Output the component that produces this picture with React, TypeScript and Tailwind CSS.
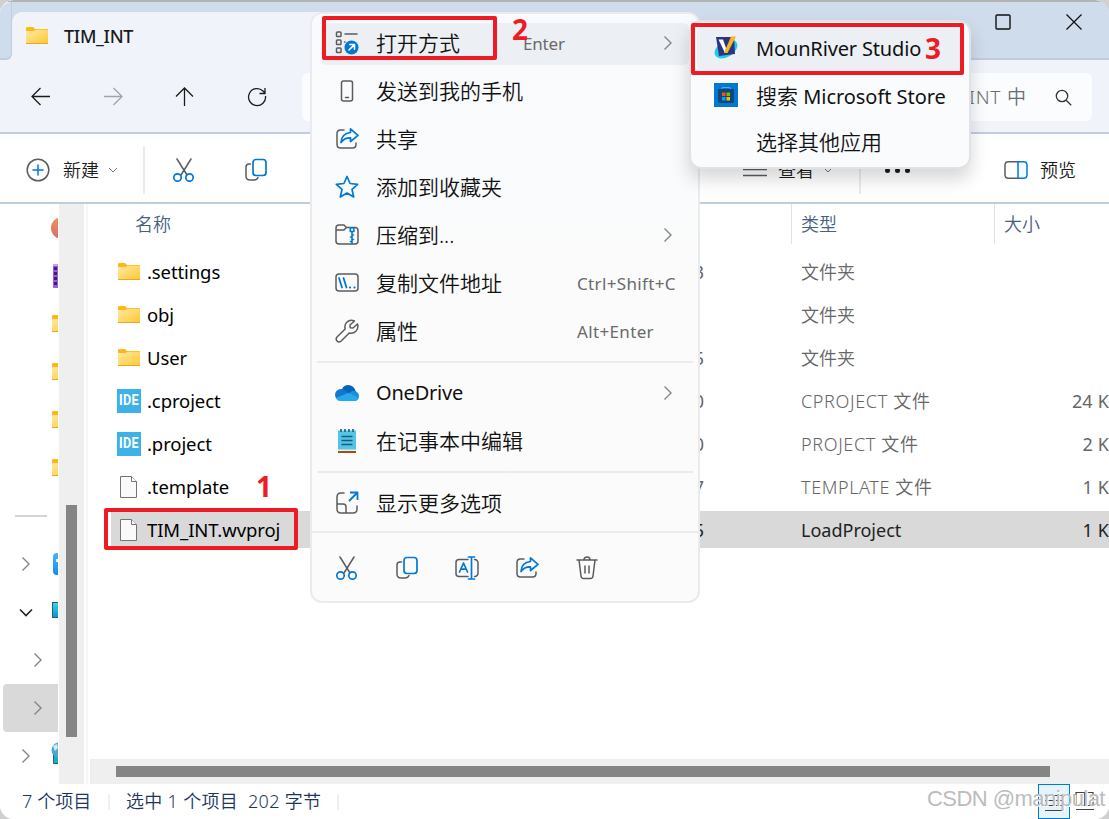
import type { ReactNode } from "react";

const GRAY = "#5c5c5c";
const BLUE = "#0078d4";

function Svg({ children, size = 24, className = "" }: { children: ReactNode; size?: number; className?: string }) {
    return (
        <svg
            width={size}
            height={size}
            viewBox="0 0 24 24"
            fill="none"
            stroke={GRAY}
            strokeWidth="1.5"
            strokeLinecap="round"
            strokeLinejoin="round"
            className={`shrink-0 ${className}`}
        >
            {children}
        </svg>
    );
}

function FolderIcon() {
    return (
        <svg width="24" height="24" viewBox="0 0 24 24" className="shrink-0">
            <defs>
                <linearGradient id="folder" x1="0" y1="0" x2="1" y2="1">
                    <stop offset="0" stopColor="#ffe9a3" />
                    <stop offset="1" stopColor="#ffc833" />
                </linearGradient>
            </defs>
            <path d="M1 4.500Q1 3 2.200 3H8l2 2h13v3H1z" fill="#fdb813" />
            <path d="M1 7h7.500L10.500 5.700H23v13.800H1z" fill="url(#folder)" />
            <path d="M1 19.500h22" stroke="#e9a820" />
        </svg>
    );
}

function FileIcon() {
    return (
        <svg width="24" height="24" viewBox="0 0 24 24" fill="#fafafa" stroke="#737373" className="shrink-0">
            <path d="M3.500 1.500h11l5 5v16h-16z" />
            <path d="M14.500 1.500v5h5" fill="#fff" />
        </svg>
    );
}

function IdeIcon() {
    return (
        <span className="flex size-6 shrink-0 items-center justify-center bg-[#3db2e6] pb-0.5 font-['Roboto'] text-[14px] font-bold tracking-[0.3px] text-white">
            <span className="scale-x-90">IDE</span>
        </span>
    );
}

function ScissorsIcon() {
    return (
        <Svg>
            <path d="M5 1l10 16M19 1L9 17" />
            <g stroke={BLUE} strokeWidth="1.7">
                <circle cx="5.500" cy="19.500" r="3.700" />
                <circle cx="17.500" cy="19.500" r="3.700" />
            </g>
        </Svg>
    );
}

function CopyIcon() {
    return (
        <Svg>
            <path d="M6.500 6H5Q2 6 2 9v9q0 4 4 4h4q3 0 4-2.500" />
            <rect x="9" y="1.500" width="13" height="16" rx="3" stroke={BLUE} strokeWidth="1.7" />
        </Svg>
    );
}

function ShareIcon() {
    return (
        <Svg>
            <path d="M9 3H5.500Q2 3 2 6.500v11Q2 21 5.500 21h12q3.500 0 3.500-3.500V16" />
            <path
                d="M15.500 1.800L23 8.300l-7.500 6.200v-3.700Q9.500 10.500 6 15.500 6.500 6.500 15.500 5.500z"
                stroke={BLUE}
                strokeWidth="1.7"
            />
        </Svg>
    );
}

function OpenWithIcon() {
    return (
        <Svg>
            <rect x="1.500" y="1" width="4.500" height="4.500" rx=".8" />
            <rect x="1.500" y="9" width="4.500" height="4.500" rx=".8" />
            <rect x="1.500" y="17" width="4.500" height="4.500" rx=".8" />
            <path d="M10 3h12M9.500 11h.5" />
            <circle cx="16.500" cy="16.500" r="7" fill={BLUE} stroke="none" />
            <path d="M14 19l5-5M14.800 13.500h4.700v4.700" stroke="#fff" strokeWidth="1.6" />
        </Svg>
    );
}

function PhoneIcon() {
    return (
        <Svg>
            <rect x="6.500" y="2" width="11" height="20" rx="2" />
            <path d="M10.500 18.500h3" />
        </Svg>
    );
}

function StarIcon() {
    return (
        <Svg>
            <path
                d="M12 1.500l3.100 7 7.600.8-5.700 5.100 1.700 7.600-6.700-4-6.700 4L7 14.400 1.300 9.300l7.600-.8z"
                stroke={BLUE}
                strokeWidth="1.7"
            />
        </Svg>
    );
}

function ZipIcon() {
    return (
        <Svg>
            <path d="M1 7V5q0-3 3-3h5l2.500 2.500H20q3 0 3 3V18q0 3-3 3H4q-3 0-3-3zM1 7h8l2.500-2.500" />
            <g stroke={BLUE} strokeWidth="1.6">
                <rect x="15.300" y="4.700" width="3.600" height="3.800" />
                <path d="M17 9v12M17 12h1.500M17 16.500h1.500M15.500 14H17M15.500 18.500H17" />
            </g>
        </Svg>
    );
}

function PathIcon() {
    return (
        <Svg>
            <rect x="1" y="3" width="22" height="17" rx="3" />
            <path d="M4 7l3 9.500M8.500 7l3 9.500M14.800 16.500h.4M19.300 16.500h.4" stroke={BLUE} strokeWidth="1.8" />
        </Svg>
    );
}

function WrenchIcon() {
    return (
        <Svg>
            <path d="M19.500 2Q15 0 11.800 3.200 9 6 10.200 10L2 18q-1.700 2 0 4t4.200 0l8-8q4 1 6.700-1.800Q23.800 9 22.500 5L18 9l-2.800-.3L15 6z" />
        </Svg>
    );
}

function OneDriveIcon() {
    return (
        <svg width="24" height="24" viewBox="0 0 24 24" className="shrink-0">
            <path d="M6 12Q7 4 13 4t8 7l-7 5z" fill="#0364b8" />
            <path d="M5 19q-5-1-5-5.500Q.5 8.500 6 8q4-.5 9 6z" fill="#0f78d4" />
            <path d="M13 14q3-5 7-4 4 1.500 4 5 0 4-4 5h-5z" fill="#1490df" />
            <path d="M1 17l12-5q2 0 10.500 5-1 3-4 3H5q-3 0-4-3z" fill="#28a8ea" />
        </svg>
    );
}

function NotepadIcon() {
    return (
        <svg width="24" height="24" viewBox="0 0 24 24" className="shrink-0">
            <path d="M3 21h18v3H3z" fill="#a5500a" />
            <path d="M3 19h18v3H3z" fill="#e9eef0" />
            <path d="M3 1.500h18v19H3z" fill="#55c5e6" />
            <path d="M6 0v3M10 0v3M14 0v3M18 0v3" stroke="#155e80" strokeWidth="1.6" />
            <path d="M6.500 7.500h11M6.500 11.500h11M6.500 15.500h11" stroke="#155e80" strokeWidth="1.500" />
        </svg>
    );
}

function MoreOptionsIcon() {
    return (
        <Svg>
            <path d="M9 2H6Q2 2 2 6v12q0 4 4 4h12q4 0 4-4v-3M2 13h6q3 0 3 3v6" />
            <path d="M14 10l8-8M15 1.500h7.500V9" stroke={BLUE} strokeWidth="1.8" strokeLinecap="butt" />
        </Svg>
    );
}

function RenameIcon() {
    return (
        <Svg>
            <path d="M13 3.500H4q-3 0-3 3v11q0 3 3 3h9M19.500 3.500q3.500 0 3.500 4v9q0 4-3.500 4" />
            <path d="M4.500 16L8.500 7l4 9M6 13.200h5M16.500 1v22M13.500 1h6M13.500 23h6" stroke={BLUE} strokeWidth="1.7" />
        </Svg>
    );
}

function TrashIcon() {
    return (
        <Svg>
            <path d="M2 4h20M4 4l2 16q.3 2.500 2.500 2.500h7q2.200 0 2.500-2.500l2-16M9 4q0-3 3-3t3 3M10 10v7M14 10v7" />
        </Svg>
    );
}

function MounRiverIcon() {
    return (
        <svg width="24" height="24" viewBox="0 0 24 24" className="shrink-0">
            <ellipse cx="12" cy="13" rx="12.500" ry="8" fill="#20c9ef" transform="rotate(-32 12 13)" />
            <path d="M2 1h18l1 17-16 2z" fill="#29357f" />
            <path d="M4.500 3.500h4.500l3 8.500-1 5z" fill="#fff" />
            <path d="M17 .5h5L13.500 17H10z" fill="#f7b523" />
        </svg>
    );
}

function StoreIcon() {
    return (
        <svg width="24" height="24" viewBox="0 0 24 24" className="shrink-0">
            <path d="M0 0h24v24H0z" fill="#0078d4" />
            <path d="M4 6h16v12q0 2-2 2H6q-2 0-2-2z" fill="#134577" />
            <path d="M8 6V4.500h8V6" stroke="#38b6f0" fill="none" />
            <path d="M8 9.500h3.500V13H8z" fill="#f25022" />
            <path d="M12.500 9.500H16V13h-3.500z" fill="#7fba00" />
            <path d="M8 14h3.500v3.500H8z" fill="#00a4ef" />
            <path d="M12.500 14H16v3.500h-3.500z" fill="#ffb900" />
        </svg>
    );
}

function ChevronRight({ className = "" }: { className?: string }) {
    return (
        <svg width="10" height="16" viewBox="0 0 10 16" fill="none" stroke="#858585" strokeWidth="1.400" className={`shrink-0 ${className}`}>
            <path d="M1.500 1.500L8 8l-6.500 6.500" />
        </svg>
    );
}

function ChevronDown({ className = "" }: { className?: string }) {
    return (
        <svg width="10" height="6" viewBox="0 0 10 6" fill="none" stroke="#777" className={`shrink-0 ${className}`}>
            <path d="M1 1l4 4 4-4" />
        </svg>
    );
}

const files = [
    { name: ".settings", icon: <FolderIcon />, date: "3", type: "文件夹", size: "" },
    { name: "obj", icon: <FolderIcon />, date: "", type: "文件夹", size: "" },
    { name: "User", icon: <FolderIcon />, date: "5", type: "文件夹", size: "" },
    { name: ".cproject", icon: <IdeIcon />, date: "0", type: "CPROJECT 文件", size: "24 KB", typeClass: "tracking-[0.65px]" },
    { name: ".project", icon: <IdeIcon />, date: "0", type: "PROJECT 文件", size: "2 KB", typeClass: "tracking-[0.65px]" },
    { name: ".template", icon: <FileIcon />, date: "7", type: "TEMPLATE 文件", size: "1 KB", typeClass: "tracking-[0.6px]" },
    { name: "TIM_INT.wvproj", icon: <FileIcon />, date: "5", type: "LoadProject", size: "1 KB", typeClass: "font-normal", selected: true },
];

function TitleBar() {
    return (
        <div className="flex h-[60px] rounded-t-[14px] border-t-2 border-[#b3b3b3] bg-[#f0f4fa]">
            <div className="flex flex-1 bg-[#cfdceb]">
                <div className="w-3 shrink-0 bg-[#f0f4fa]">
                    <div className="h-full rounded-tl-[12px] rounded-br-[6px] border-r border-b-2 border-[#bfcddf] bg-[#cfdceb]" />
                </div>
                <div className="mt-2.5 flex w-[684px] items-center rounded-t-[10px] bg-[#f0f4fa] pb-[1px] pl-[13px]">
                    <FolderIcon />
                    <span className="ml-[15px] text-[18px] font-medium tracking-[-0.3px] text-[#1b1b1b]">TIM_INT</span>
                </div>
                <div className="flex flex-1 items-start justify-end gap-[55px] border-b-2 border-[#bfcddf] pt-[12px] pr-[27px]">
                    <svg width="16" height="16" viewBox="0 0 16 16" fill="none" stroke="#111" strokeWidth="1.400">
                        <rect x="1" y="1" width="14" height="14" rx="1" />
                    </svg>
                    <svg width="16" height="16" viewBox="0 0 16 16" stroke="#111" strokeWidth="1.300">
                        <path d="M.5.5l15 15M15.500.5l-15 15" />
                    </svg>
                </div>
            </div>
        </div>
    );
}

function NavBar() {
    return (
        <div className="flex h-[74px] items-center border-b-2 border-[#bfcddf] bg-[#f0f4fa] pt-0.5 pl-[31px]">
            <svg width="20" height="20" viewBox="0 0 20 20" fill="none" stroke="#1b1b1b" strokeWidth="1.300">
                <path d="M19 9.500H1.500M9.500 1L1 9.500 9.500 18" />
            </svg>
            <svg width="20" height="20" viewBox="0 0 20 20" fill="none" stroke="#a0a3a8" strokeWidth="1.300" className="ml-[52px]">
                <path d="M1 9.500h17.500M10.500 1L19 9.500 10.500 18" />
            </svg>
            <svg width="20" height="20" viewBox="0 0 20 20" fill="none" stroke="#1b1b1b" strokeWidth="1.300" className="ml-[51px]">
                <path d="M10.500 19V1.500M2 9.500L10.500 1 19 9.500" />
            </svg>
            <svg width="20" height="20" viewBox="0 0 20 20" fill="none" stroke="#1b1b1b" strokeWidth="1.300" className="ml-[53px]">
                <path d="M18.500 9A8.500 8.500 0 1 1 16 4l2 2M18 1v5.500h-5.500" />
            </svg>
            <div className="ml-[35px] h-12 w-[380px] rounded-[6px] bg-[#fafcfe]" />
            <div className="mr-[17px] ml-5 flex h-12 flex-1 items-center justify-between rounded-[6px] bg-[#fafcfe] pr-5">
                <span className="pl-[267px] text-[19px] tracking-[0.8px] whitespace-pre text-[#6b6d70]">INT 中</span>
                <svg width="17" height="17" viewBox="0 0 17 17" fill="none" stroke="#333" strokeWidth="1.300">
                    <circle cx="7" cy="7" r="5.700" />
                    <path d="M11.200 11.200l5 5" />
                </svg>
            </div>
        </div>
    );
}

function Toolbar() {
    return (
        <div className="flex h-[70px] items-center border-b-2 border-[#bfcddf] bg-white pt-[3px] pl-[26px] text-[18px] text-[#1b1b1b]">
            <Svg>
                <circle cx="12" cy="12" r="10.800" />
                <path d="M12 7v10M7 12h10" stroke={BLUE} />
            </Svg>
            <span className="ml-[13px]">新建</span>
            <ChevronDown className="ml-[9px]" />
            <div className="ml-[25px] h-12 w-0.5 bg-[#ebebeb]" />
            <div className="ml-[27px] flex gap-12">
                <ScissorsIcon />
                <CopyIcon />
            </div>
            <svg width="24" height="16" viewBox="0 0 24 16" fill="none" stroke={GRAY} strokeWidth="1.400" className="mt-[3px] ml-[475px]">
                <path d="M0 1h24M0 6.500h24M0 12.500h24" />
            </svg>
            <span className="ml-[11px]">查看</span>
            <ChevronDown className="ml-[9px]" />
            <div className="ml-[26px] h-12 w-0.5 bg-[#ebebeb]" />
            <div className="mt-0.5 ml-[24px] flex gap-[5px]">
                <i className="size-[5px] rounded-full bg-[#1b1b1b]" />
                <i className="size-[5px] rounded-full bg-[#1b1b1b]" />
                <i className="size-[5px] rounded-full bg-[#1b1b1b]" />
            </div>
            <Svg className="ml-[94px]">
                <path d="M14 20.200H4.500q-3.500 0-3.500-3.500V7.300q0-3.500 3.500-3.500H14" />
                <path d="M14 3.800h5.500Q23 3.800 23 7.300v9.400q0 3.500-3.500 3.500H14z" stroke={BLUE} fill="#f4faff" />
            </Svg>
            <span className="ml-[12px]">预览</span>
        </div>
    );
}

function SidePane() {
    return (
        <div className="flex w-[90px] shrink-0">
            <div className="flex w-[58px] flex-col overflow-hidden">
                <div className="flex h-12 shrink-0 items-center pl-[51px]">
                    <div className="h-[22px] w-[22px] shrink-0 rounded-full bg-linear-to-b from-[#f4915c] to-[#d2706d]" />
                </div>
                <div className="flex h-12 shrink-0 items-center pl-[53px]">
                    <svg width="20" height="24" viewBox="0 0 20 24" className="shrink-0">
                        <rect width="20" height="24" rx="1" fill="#9b59e8" />
                        <path d="M0 1h20" stroke="#cf9cf5" strokeWidth="2" />
                        <path d="M2.500 3v20" stroke="#3d2166" strokeWidth="3" strokeDasharray="3 2" />
                    </svg>
                </div>
                {[0, 1, 2, 3].map((i) => (
                    <div key={i} className="flex h-12 shrink-0 items-center pl-[51px]">
                        <FolderIcon />
                    </div>
                ))}
                <div className="flex h-12 shrink-0 items-center pl-[15px]">
                    <div className="h-0.5 w-8 bg-[#d4d4d4]" />
                </div>
                <div className="flex h-12 shrink-0 items-center pl-[21px]">
                    <ChevronRight />
                    <div className="ml-[22px] h-[22px] w-5 shrink-0 rounded bg-linear-to-b from-[#45b4ff] to-[#098cf5]">
                        <div className="mt-[6px] ml-[3px] h-[3px] w-1 bg-white" />
                    </div>
                </div>
                <div className="flex h-12 shrink-0 items-center pl-[19px]">
                    <svg width="14" height="9" viewBox="0 0 14 9" fill="none" stroke="#222" strokeWidth="1.600" className="shrink-0">
                        <path d="M1 1.500l6 6 6-6" />
                    </svg>
                    <div className="mb-1 ml-[19px] h-4 w-5 shrink-0 border border-[#236173] bg-linear-to-b from-[#35d5e5] to-[#1594c8]" />
                </div>
                <div className="flex h-12 shrink-0 items-center pl-[33px]">
                    <ChevronRight />
                </div>
                <div className="ml-[3px] flex h-12 shrink-0 items-center rounded-l-sm bg-[#d9d9d9] pl-[30px]">
                    <ChevronRight />
                </div>
                <div className="flex h-12 shrink-0 items-center pl-[21px]">
                    <ChevronRight />
                    <svg width="24" height="24" viewBox="0 0 24 24" className="mb-1 ml-[20px] shrink-0">
                        <path d="M2.500 8h20v13.500h-20z" fill="#17aec8" stroke="#236173" />
                        <circle cx="8" cy="8" r="7.500" fill="#4ea4d8" />
                        <path d="M2 4l4-2 1 4-3 3z" fill="#d4eefa" />
                    </svg>
                </div>
            </div>
            <div className="ml-px w-[25px] bg-[#efefef] pt-[301px] pl-[7px]">
                <div className="h-[232px] w-[11px] bg-[#858585]" />
            </div>
            <div className="ml-0.5 w-0.5 bg-[#f6f6f6]" />
        </div>
    );
}

function FileList() {
    return (
        <div className="flex min-w-0 flex-1 flex-col overflow-hidden text-[18px]">
            <div className="flex h-[46px] shrink-0 items-start text-[#48607f]">
                <div className="flex h-10 w-[701px] items-center pl-[45px]">名称</div>
                <div className="flex h-10 w-[203px] items-center border-l border-[#e3e3e3] pl-[9px]">类型</div>
                <div className="flex h-10 items-center border-l border-[#e3e3e3] pl-[9px]">大小</div>
            </div>
            {files.map((f) => (
                <div key={f.name} className="flex h-[43px] shrink-0 items-center pl-[21px]">
                    <div className={`flex h-[37px] w-[1030px] shrink-0 items-center pl-[6px] ${f.selected ? "bg-[#d9d9d9] text-[#222]" : "text-[#666]"}`}>
                        {f.icon}
                        <span className="mt-0.5 ml-[6px] w-[460px] text-[18.500px] font-normal tracking-[-0.1px] text-black">{f.name}</span>
                        <span className="w-[97px] text-right font-normal">{f.date}</span>
                        <span className={`ml-[97px] w-[260px] ${f.typeClass ?? ""}`}>{f.type}</span>
                        <span className="w-[60px] text-right font-normal tracking-[0.2px] whitespace-nowrap">{f.size}</span>
                    </div>
                </div>
            ))}
            <div className="mt-auto h-[25px] bg-[#efefef] pt-[7px] pl-[26px]">
                <div className="h-[11px] w-[934px] bg-[#858585]" />
            </div>
        </div>
    );
}

function StatusBar() {
    return (
        <div className="flex h-[35px] items-center rounded-b-[12px] bg-white pl-[22px] text-[18px] text-[#1c3560]">
            <span className="mb-0.5 w-[86px] tracking-[0.1px] whitespace-nowrap">7 个项目</span>
            <div className="h-4 w-0.5 bg-[#f0f0f0]" />
            <span className="mb-0.5 ml-4 w-[211px] tracking-[0.3px] whitespace-pre">选中 1 个项目  202 字节</span>
            <div className="h-4 w-0.5 bg-[#f0f0f0]" />
            <div className="ml-auto flex h-[35px] w-8 items-center justify-center border border-[#0078d4] bg-[#e5f3fb]">
                <svg width="18" height="18" viewBox="0 0 18 18" stroke="#444" strokeWidth="1.200">
                    <path d="M0 2.500h18M0 7.500h18M0 12.500h18M0 17.500h18" />
                </svg>
            </div>
            <svg width="20" height="20" viewBox="0 0 20 20" fill="none" stroke="#444" strokeWidth="1.200" className="mr-[14px] mb-0.5 ml-[5px]">
                <path d="M1 1.500h17v13H1zM9.500 1.500v13M1 18.500h18" />
            </svg>
        </div>
    );
}

type ItemProps = { icon?: ReactNode; label: string; hint?: string; arrow?: boolean; active?: boolean; labelClass?: string };

function MenuItem({ icon, label, hint, arrow, active, labelClass = "" }: ItemProps) {
    return (
        <div className="flex h-12 items-center px-[9px]">
            <div className={`flex h-[42px] w-full items-center rounded-[6px] pb-0.5 pl-[14px] ${active ? "bg-[#eceff4]" : ""}`}>
                {icon}
                <span className={`ml-[17px] flex-1 whitespace-nowrap ${labelClass}`}>{label}</span>
                {hint && (
                    <span className={`text-[17px] font-normal text-[#6a6a6a] ${active ? "w-[140px] tracking-[-0.2px]" : "w-[112px] tracking-[0.35px]"} whitespace-nowrap`}>{hint}</span>
                )}
                {arrow && <ChevronRight className="mr-[16px]" />}
            </div>
        </div>
    );
}

function ContextMenu() {
    return (
        <div className="absolute top-3 left-[310px] h-[591px] w-[390px] rounded-[12px] border-2 border-[#e9ebed] bg-linear-to-b from-[#f8fafd] to-[#fbfbfb] to-50% pt-[6px] text-[21px] text-[#111]">
            <MenuItem icon={<OpenWithIcon />} label="打开方式" hint="Enter" arrow active />
            <MenuItem icon={<PhoneIcon />} label="发送到我的手机" />
            <MenuItem icon={<ShareIcon />} label="共享" />
            <MenuItem icon={<StarIcon />} label="添加到收藏夹" />
            <MenuItem icon={<ZipIcon />} label="压缩到..." arrow />
            <MenuItem icon={<PathIcon />} label="复制文件地址" hint="Ctrl+Shift+C" />
            <MenuItem icon={<WrenchIcon />} label="属性" hint="Alt+Enter" />
            <div className="mx-[5px] mt-[5px] mb-[7px] h-0.5 bg-[#ebebeb]" />
            <MenuItem icon={<OneDriveIcon />} label="OneDrive" labelClass="text-[20px] font-normal tracking-[-0.2px]" arrow />
            <MenuItem icon={<NotepadIcon />} label="在记事本中编辑" />
            <div className="mx-[5px] mt-[5px] mb-[7px] h-0.5 bg-[#ebebeb]" />
            <MenuItem icon={<MoreOptionsIcon />} label="显示更多选项" />
            <div className="mt-[3px] h-0.5 bg-[#ebebeb]" />
            <div className="flex gap-9 pt-[23px] pl-[23px]">
                <ScissorsIcon />
                <CopyIcon />
                <RenameIcon />
                <ShareIcon />
                <TrashIcon />
            </div>
        </div>
    );
}

function OpenWithMenu() {
    return (
        <div className="absolute top-[20px] left-[689px] h-[149px] w-[282px] rounded-[12px] border-2 border-[#dfe3e8] bg-[#fafbfd] pt-[3px] text-[20px] text-[#111] shadow-[0_10px_18px_rgba(0,0,0,0.16)]">
            <div className="mx-[6px] flex h-[46px] items-center rounded-[6px] bg-[#eceff4] pl-[17px]">
                <MounRiverIcon />
                <span className="mt-0.5 ml-[18px] font-normal tracking-[-0.15px] whitespace-nowrap">MounRiver Studio</span>
            </div>
            <div className="flex h-12 items-center pl-[23px]">
                <StoreIcon />
                <span className="mt-0.5 ml-[18px] whitespace-nowrap">
                    <span className="text-[21px]">搜索</span> <span className="font-normal tracking-[-0.05px]">Microsoft Store</span>
                </span>
            </div>
            <div className="flex h-[46px] items-center pl-[65px] text-[21px]">选择其他应用</div>
        </div>
    );
}

export default function App() {
    return (
        <main className="relative h-[819px] w-[1109px] overflow-hidden bg-[#d0d0d0] font-['Noto_Sans','Noto_Sans_CJK_SC',sans-serif] leading-none font-[350]">
            <div className="flex h-full flex-col overflow-hidden rounded-[14px] bg-white">
                <TitleBar />
                <NavBar />
                <Toolbar />
                <div className="flex min-h-0 flex-1">
                    <SidePane />
                    <FileList />
                </div>
                <StatusBar />
            </div>

            <ContextMenu />
            <OpenWithMenu />

            {/* Step markers */}
            <div className="absolute top-[508px] left-[104px] h-[42px] w-[194px] rounded-[2px] border-4 border-[#ed1c24]" />
            <div className="absolute top-[16px] left-[322px] h-[44px] w-[175px] rounded-[2px] border-4 border-[#ed1c24]" />
            <div className="absolute top-[23px] left-[691px] h-[52px] w-[273px] rounded-[2px] border-4 border-[#ed1c24]" />
            <div className="absolute top-[472px] left-[256px] text-[28px] font-bold text-[#ed1c24]">1</div>
            <div className="absolute top-[15px] left-[512px] text-[28px] font-bold text-[#ed1c24]">2</div>
            <div className="absolute top-[34px] left-[925px] text-[28px] font-bold text-[#ed1c24]">3</div>

            <div className="absolute top-[788px] left-[927px] font-['Liberation_Sans'] text-[22px] tracking-[-0.55px] whitespace-nowrap text-[#bcbcbc] [text-shadow:1px_1px_0_#fff]">
                CSDN @manipulat
            </div>
        </main>
    );
}
